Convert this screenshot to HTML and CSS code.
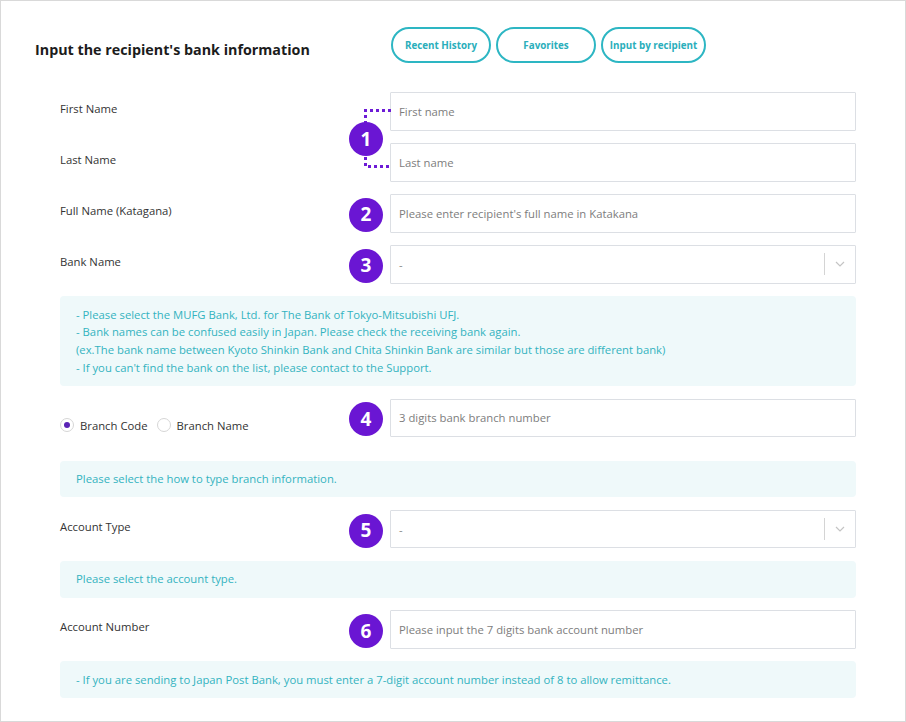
FILE: index.html
```html
<!DOCTYPE html>
<html lang="en">
<head>
    <meta charset="UTF-8">
    <meta name="viewport" content="width=device-width, initial-scale=1.0">
    <title>Recipient bank information</title>
    <link rel="stylesheet" href="styles.css">
</head>
<body>
    <div id="recipient-card">
        <div class="head">
            <h1 class="title">Input the recipient's bank information</h1>
            <div class="tabs">
                <button type="button" class="tab">Recent History</button>
                <button type="button" class="tab">Favorites</button>
                <button type="button" class="tab tab-wide">Input by recipient</button>
            </div>
        </div>

        <form class="bank-form">
            <label class="field-label" for="first-name">First Name</label>
            <div class="step step-pair">
                <svg class="bracket" width="27" height="59" viewBox="0 0 27 59">
                    <path d="M27 1.5 H1.5 V57.5 H27" fill="none" stroke="#6d1bd6" stroke-width="3" stroke-dasharray="3 3"/>
                </svg>
                <span class="badge">1</span>
            </div>
            <input class="field" type="text" id="first-name" placeholder="First name">

            <label class="field-label" for="last-name">Last Name</label>
            <input class="field" type="text" id="last-name" placeholder="Last name">

            <label class="field-label" for="kana-name">Full Name (Katagana)</label>
            <div class="step"><span class="badge">2</span></div>
            <input class="field" type="text" id="kana-name" placeholder="Please enter recipient's full name in Katakana">

            <label class="field-label">Bank Name</label>
            <div class="step"><span class="badge">3</span></div>
            <div class="field select">
                <span class="select-value">-</span>
                <span class="select-arrow">
                    <svg width="10" height="6" viewBox="0 0 10 6"><path d="M1 1 L5 5 L9 1" fill="none" stroke="#c4c4c4" stroke-width="1.2"/></svg>
                </span>
            </div>

            <div class="note">
                - Please select the MUFG Bank, Ltd. for The Bank of Tokyo-Mitsubishi UFJ.<br>
                - Bank names can be confused easily in Japan. Please check the receiving bank again.<br>
                (ex.The bank name between Kyoto Shinkin Bank and Chita Shinkin Bank are similar but those are different bank)<br>
                - If you can't find the bank on the list, please contact to the Support.
            </div>

            <div class="radios">
                <label class="radio"><span class="dot checked"></span>Branch Code</label>
                <label class="radio"><span class="dot"></span>Branch Name</label>
            </div>
            <div class="step"><span class="badge">4</span></div>
            <input class="field" type="text" id="branch" placeholder="3 digits bank branch number">

            <div class="note note-spaced">Please select the how to type branch information.</div>

            <label class="field-label">Account Type</label>
            <div class="step"><span class="badge">5</span></div>
            <div class="field select">
                <span class="select-value">-</span>
                <span class="select-arrow">
                    <svg width="10" height="6" viewBox="0 0 10 6"><path d="M1 1 L5 5 L9 1" fill="none" stroke="#c4c4c4" stroke-width="1.2"/></svg>
                </span>
            </div>

            <div class="note">Please select the account type.</div>

            <label class="field-label" for="account-number">Account Number</label>
            <div class="step"><span class="badge">6</span></div>
            <input class="field" type="text" id="account-number" placeholder="Please input the 7 digits bank account number">

            <div class="note">- If you are sending to Japan Post Bank, you must enter a 7-digit account number instead of 8 to allow remittance.</div>
        </form>
    </div>
</body>
</html>
```

FILE: styles.css
```css
body {
    margin: 0;
    background-color: #ffffff;
    font-family: 'Open Sans', 'Noto Sans', sans-serif;
    color: #333333;
}

#recipient-card {
    box-sizing: border-box;
    width: 906px;
    height: 722px;
    border: 1px solid #d9d9d9;
    padding: 26px 49px 0 34px;
}

.head {
    display: flex;
    align-items: center;
}

.title {
    flex: 0 0 356px;
    margin: 9px 0 0 0;
    font-size: 14.3px;
    font-weight: 700;
    color: #1c1c1c;
}

.tabs {
    display: flex;
    gap: 5px;
}

.tab {
    box-sizing: border-box;
    width: 100px;
    height: 36px;
    padding: 0 4px;
    border: 2px solid #2db6c3;
    border-radius: 18px;
    background-color: #ffffff;
    color: #2aaebb;
    font-family: inherit;
    font-size: 9.8px;
    font-weight: 700;
    white-space: nowrap;
    cursor: pointer;
}

    .tab-wide {
        width: 105px;
    }

.bank-form {
    display: grid;
    grid-template-columns: 1fr 34px 466px;
    column-gap: 7px;
    row-gap: 12.5px;
    margin: 29px 0 0 25px;
}

.field-label {
    grid-column: 1;
    align-self: center;
    padding-bottom: 6px;
    font-size: 11.3px;
    color: #333333;
}

.step {
    grid-column: 2;
    display: flex;
    align-items: center;
    justify-content: center;
    padding-top: 3px;
}

    .step-pair {
        grid-row: span 2;
        position: relative;
        padding-top: 5px;
    }

.bracket {
    position: absolute;
    left: 15px;
    top: 17px;
}

.badge {
    position: relative;
    display: flex;
    align-items: center;
    justify-content: center;
    width: 34px;
    height: 34px;
    border-radius: 50%;
    background-color: #6a16d3;
    color: #ffffff;
    font-size: 19px;
    font-weight: 700;
    line-height: 1;
}

.field {
    grid-column: 3;
    box-sizing: border-box;
    height: 38.5px;
    margin: 0;
    padding: 0 8px;
    border: 1px solid #dcdfe4;
    border-radius: 1px;
    background-color: #ffffff;
    font-family: inherit;
    font-size: 11.3px;
    color: #333333;
}

    .field::placeholder {
        color: #7d7d7d;
    }

.select {
    display: flex;
    align-items: center;
}

.select-value {
    flex: 1;
    color: #8a8a8a;
}

.select-arrow {
    display: flex;
    align-items: center;
    justify-content: center;
    width: 30px;
    height: 22px;
    margin-right: -8px;
    border-left: 1px solid #d4d4d4;
}

.note {
    grid-column: 1 / -1;
    padding: 9.5px 16px;
    border-radius: 4px;
    background-color: #eff9fa;
    color: #33b3c0;
    font-size: 11.3px;
    line-height: 17.8px;
}

    .note-spaced {
        margin-top: 11px;
    }

.radios {
    grid-column: 1;
    display: flex;
    align-items: center;
    gap: 9px;
    padding-top: 15px;
    font-size: 11.3px;
}

.radio {
    display: flex;
    align-items: center;
    gap: 6px;
    color: #333333;
}

.dot {
    box-sizing: border-box;
    position: relative;
    width: 14px;
    height: 14px;
    border: 1px solid #d6d6d6;
    border-radius: 50%;
    background-color: #ffffff;
}

    .dot.checked::after {
        content: "";
        position: absolute;
        left: 3px;
        top: 3px;
        width: 6px;
        height: 6px;
        border-radius: 50%;
        background-color: #5a23b5;
    }
```
